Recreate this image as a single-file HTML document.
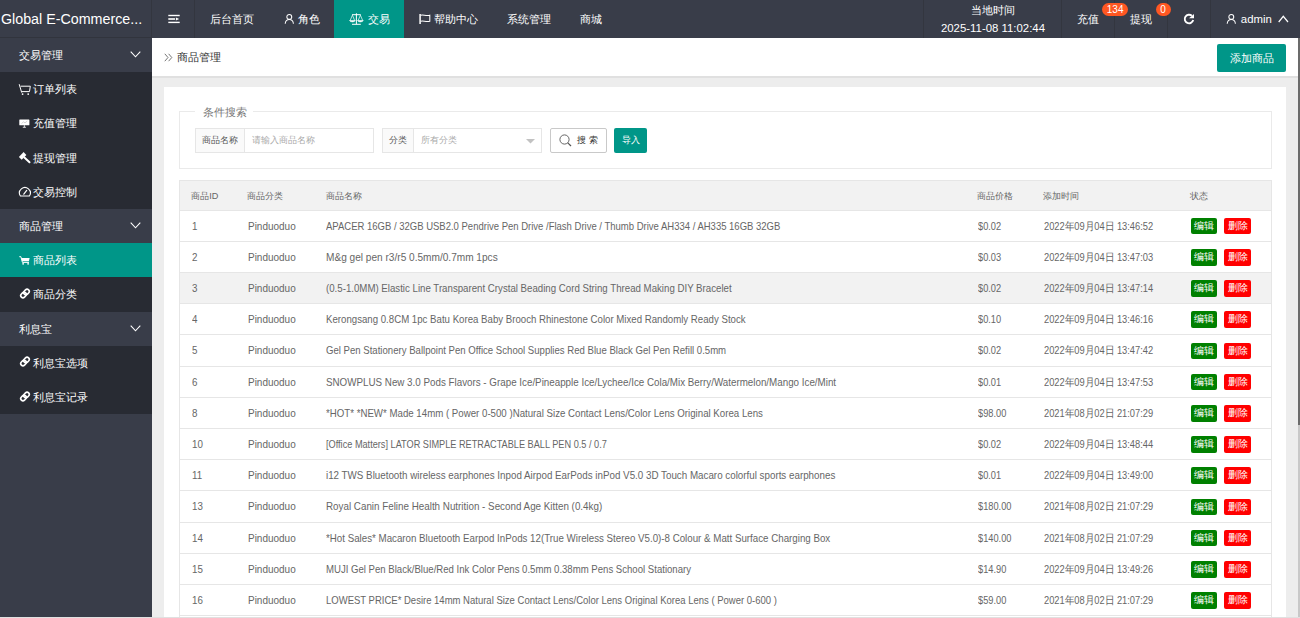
<!DOCTYPE html>
<html><head><meta charset="utf-8">
<style>
*{box-sizing:border-box;margin:0;padding:0}
html,body{width:1300px;height:618px;overflow:hidden;background:#ededed;font-family:"Liberation Sans",sans-serif;color:#666}
.abs{position:absolute}
#hdr{position:absolute;left:0;top:0;width:1300px;height:38px;background:#393D49;color:#fff}
#hdr .t{position:absolute;top:0;height:38px;line-height:38px;font-size:10.64px;color:#fff;white-space:nowrap}
#hdr .sep{position:absolute;top:0;width:1px;height:38px;background:#33363f}
#logo{position:absolute;left:0;top:0;width:160px;height:38px;line-height:38px;font-size:15.2px;color:#fff;white-space:nowrap;transform:scaleX(0.94);transform-origin:0 50%}
#side{position:absolute;left:0;top:38px;width:152px;height:580px;background:#393D49}
#side .g{position:absolute;left:0;width:152px;height:34.2px;line-height:34.2px;font-size:10.64px;color:#fff;padding-left:19px}
#side .d{position:absolute;left:0;width:152px;background:#282B33}
#side .i{position:absolute;left:0;width:152px;height:34.2px;line-height:34.2px;font-size:10.64px;color:#fff;padding-left:33px;white-space:nowrap}
#side .i.on{background:#009688}
#side svg{position:absolute}
#crumb{position:absolute;left:152px;top:38px;width:1146px;height:39.6px;background:#fff;border-bottom:2px solid #e0e0e0}
#card{position:absolute;left:164px;top:87px;width:1122.3px;height:540px;background:#fff}
#fs{position:absolute;left:179px;top:110.7px;width:1093px;height:58.3px;border:1px solid #eaeaea}
#legend{position:absolute;left:195px;top:105px;padding:0 6px 0 8px;background:#fff;font-size:11.4px;color:#777;line-height:14px}
.ig{position:absolute;top:128px;height:25px;border:1px solid #e6e6e6;background:#fff}
.ig .lab{position:absolute;left:0;top:0;height:23px;line-height:23px;background:#fafafa;border-right:1px solid #e6e6e6;font-size:9.12px;color:#555;text-align:center}
.ig .ph{position:absolute;top:0;height:23px;line-height:23px;font-size:9.12px;color:#aaa}
#tbl{position:absolute;left:179.4px;top:180.2px;width:1092.3px}
.tr{position:absolute;left:0;width:1092.3px;border-bottom:1px solid #e6e6e6;border-left:1px solid #e6e6e6;border-right:1px solid #e6e6e6}
.tr .c{position:absolute;top:0;white-space:nowrap;font-size:10.64px;color:#666;transform-origin:0 50%}
.th .c{font-size:9.12px}
.btn{position:absolute;width:26.7px;height:16.6px;border-radius:2px;color:#fff;font-size:9.7px;line-height:16.6px;text-align:center}
.be{background:#008000}
.bd{background:#ff0000}
</style></head><body>

<div id="hdr">
  <div class="abs" style="left:0;top:37px;width:152px;height:1px;background:#31343d"></div>
  <div id="logo" style="padding-left:1px">Global E-Commerce...</div>
  <div class="sep" style="left:151px"></div>
  <div class="sep" style="left:194px"></div>
  <!-- hamburger -->
  <svg class="abs" style="left:168px;top:14px" width="12" height="10" viewBox="0 0 12 10"><rect x="0.3" y="0.8" width="11.4" height="1.4" fill="#fff"/><rect x="0.3" y="4.2" width="6.7" height="1.6" fill="#fff"/><path d="M7.9 3.5 L11.2 5 L7.9 6.5 Z" fill="#fff"/><rect x="0.3" y="7.7" width="11.4" height="1.4" fill="#fff"/></svg>
  <div class="t" style="left:210px">后台首页</div>
  <svg class="abs" style="left:283.6px;top:13px" width="11" height="12" viewBox="0 0 11 12" fill="none" stroke="#fff" stroke-width="1.05"><circle cx="5.3" cy="3.9" r="2.45"/><path d="M1.2 10.7 C1.4 8 3.2 6.5 5.3 6.5 C7.4 6.5 9.2 8 9.4 10.7"/></svg>
  <div class="t" style="left:298px">角色</div>
  <div class="abs" style="left:334.2px;top:0;width:69.6px;height:38px;background:#009688"></div>
  <svg class="abs" style="left:349px;top:13px" width="15" height="12" viewBox="0 0 15 12"><path d="M7.4 0.3 V11.2 M3 11.3 H11.8 M3 1.7 H11.8" stroke="#fff" stroke-width="1" fill="none"/><path d="M1 7.8 L3.4 2.2 L5.8 7.8 M9 7.8 L11.4 2.2 L13.8 7.8" fill="none" stroke="#fff" stroke-width="0.7"/><path d="M0.6 7.6 H6.2 C6 9.3 0.8 9.3 0.6 7.6 Z M8.6 7.6 H14.2 C14 9.3 8.8 9.3 8.6 7.6Z" fill="#fff" stroke="#fff" stroke-width="0.6"/></svg>
  <div class="t" style="left:367.5px">交易</div>
  <svg class="abs" style="left:418px;top:13px" width="13" height="12" viewBox="0 0 13 12" fill="none" stroke="#fff"><path d="M2.1 1 V11" stroke-width="1.5"/><path d="M2.6 2.3 C5 0.9 7.5 3.4 11.8 2.3 V8.3 C7.5 9.4 5 6.9 2.6 8.3" stroke-width="1.05"/></svg>
  <div class="t" style="left:433.6px">帮助中心</div>
  <div class="t" style="left:507px">系统管理</div>
  <div class="t" style="left:580px">商城</div>

  <div class="sep" style="left:923px"></div>
  <div class="t" style="left:924px;width:138px;text-align:center;line-height:12px;top:4px">当地时间</div>
  <div class="t" style="left:924px;width:138px;text-align:center;line-height:12px;top:21.5px;font-size:11.4px">2025-11-08 11:02:44</div>
  <div class="sep" style="left:1061px"></div>
  <div class="t" style="left:1076.6px">充值</div>
  <div class="abs" style="left:1102px;top:2.8px;width:26.3px;height:13px;border-radius:7px;background:#FF5722;color:#fff;font-size:10px;line-height:13px;text-align:center;z-index:3">134</div>
  <div class="sep" style="left:1114px"></div>
  <div class="t" style="left:1129.7px">提现</div>
  <div class="abs" style="left:1155.6px;top:2.8px;width:15px;height:13px;border-radius:7px;background:#FF5722;color:#fff;font-size:10px;line-height:13px;text-align:center;z-index:3">0</div>
  <div class="sep" style="left:1167px"></div>
  <svg class="abs" style="left:1183px;top:13px" width="12" height="12" viewBox="0 0 12 12"><path d="M10.2 7.1 A4.3 4.3 0 1 1 8.9 2.8" fill="none" stroke="#fff" stroke-width="1.9"/><path d="M6 5.3 H11 V1 Z" fill="#fff"/></svg>
  <div class="sep" style="left:1210px"></div>
  <svg class="abs" style="left:1226.3px;top:13px" width="11" height="12" viewBox="0 0 11 12" fill="none" stroke="#fff" stroke-width="1.05"><circle cx="5.3" cy="3.9" r="2.45"/><path d="M1.2 10.7 C1.4 8 3.2 6.5 5.3 6.5 C7.4 6.5 9.2 8 9.4 10.7"/></svg>
  <div class="t" style="left:1240.8px;font-size:11.4px">admin</div>
  <svg class="abs" style="left:1278px;top:15px" width="11" height="8" viewBox="0 0 11 8"><path d="M0.7 7 L5.3 1.3 L10 7" fill="none" stroke="#fff" stroke-width="1.2"/></svg>
</div>

<div id="side">
  <div class="g" style="top:0">交易管理</div>
  <svg style="left:130px;top:13px" width="11" height="7" viewBox="0 0 11 7"><path d="M0.7 0.7 L5.5 5.8 L10.3 0.7" fill="none" stroke="#fff" stroke-width="1.1"/></svg>
  <div class="d" style="top:34.2px;height:136.8px"></div>
  <div class="i" style="top:34.2px">订单列表</div>
  <div class="i" style="top:68.4px">充值管理</div>
  <div class="i" style="top:102.6px">提现管理</div>
  <div class="i" style="top:136.8px">交易控制</div>
  <div class="g" style="top:171px">商品管理</div>
  <svg style="left:130px;top:184px" width="11" height="7" viewBox="0 0 11 7"><path d="M0.7 0.7 L5.5 5.8 L10.3 0.7" fill="none" stroke="#fff" stroke-width="1.1"/></svg>
  <div class="d" style="top:205.2px;height:68.4px"></div>
  <div class="i on" style="top:205.2px">商品列表</div>
  <div class="i" style="top:239.4px">商品分类</div>
  <div class="g" style="top:273.6px">利息宝</div>
  <svg style="left:130px;top:287px" width="11" height="7" viewBox="0 0 11 7"><path d="M0.7 0.7 L5.5 5.8 L10.3 0.7" fill="none" stroke="#fff" stroke-width="1.1"/></svg>
  <div class="d" style="top:307.8px;height:68.4px"></div>
  <div class="i" style="top:307.8px">利息宝选项</div>
  <div class="i" style="top:342px">利息宝记录</div>
</div>

<div id="crumb">
  <svg class="abs" style="left:12px;top:15px" width="9" height="9" viewBox="0 0 9 9"><path d="M0.8 0.8 L4 4.5 L0.8 8.2 M4.6 0.8 L7.8 4.5 L4.6 8.2" fill="none" stroke="#666" stroke-width="0.9"/></svg>
  <div class="abs" style="left:24.5px;top:0;line-height:38px;font-size:10.64px;color:#333">商品管理</div>
  <div class="abs" style="left:1065px;top:6px;width:69.2px;height:27.7px;background:#009688;border-radius:2px;color:#fff;font-size:10.64px;line-height:29.5px;text-align:center">添加商品</div>
</div>

<div id="card"></div>
<div id="fs"></div>
<div id="legend">条件搜索</div>

<div class="ig" style="left:195.3px;width:178.4px">
  <div class="lab" style="width:48.4px">商品名称</div>
  <div class="ph" style="left:56px">请输入商品名称</div>
</div>
<div class="ig" style="left:382.2px;width:160px">
  <div class="lab" style="width:30.6px">分类</div>
  <div class="ph" style="left:37.8px">所有分类</div>
  <svg class="abs" style="left:142.8px;top:9.6px" width="9" height="5" viewBox="0 0 9 5"><path d="M0 0 H9 L4.5 4.5Z" fill="#c2c2c2"/></svg>
</div>
<div class="abs" style="left:550px;top:128.3px;width:56.6px;height:24.6px;border:1px solid #c9c9c9;border-radius:2px;background:#fff"></div>
<svg class="abs" style="left:559px;top:134px" width="13" height="13" viewBox="0 0 13 13"><circle cx="5.5" cy="5.5" r="4.6" fill="none" stroke="#555" stroke-width="0.9"/><path d="M8.8 8.8 L12 12" stroke="#555" stroke-width="1.2"/></svg>
<div class="abs" style="left:577px;top:128.3px;line-height:24.6px;font-size:9.12px;color:#333;letter-spacing:2.5px">搜索</div>
<div class="abs" style="left:614px;top:128.3px;width:33.2px;height:24.6px;background:#009688;border-radius:2px;color:#fff;font-size:9.12px;line-height:24.6px;text-align:center">导入</div>

<!--TBL-->
<div id="tbl">
<div class="tr th" style="top:0px;height:30.60px;background:#f2f2f2;border-top:1px solid #e6e6e6">
<span class="c" style="left:10.8px;line-height:30.5px">商品ID</span>
<span class="c" style="left:66.6px;line-height:30.5px">商品分类</span>
<span class="c" style="left:145.8px;line-height:30.5px">商品名称</span>
<span class="c" style="left:797.0px;line-height:30.5px">商品价格</span>
<span class="c" style="left:863.0px;line-height:30.5px">添加时间</span>
<span class="c" style="left:1009.7px;line-height:30.5px">状态</span>
</div>
<div class="tr" style="top:30.50px;height:31.21px;background:#fff">
<span class="c" style="left:11.4px;line-height:30.20px;transform:scaleX(0.9200)">1</span>
<span class="c" style="left:68.0px;line-height:30.20px;transform:scaleX(0.9390)">Pinduoduo</span>
<span class="c" style="left:145.8px;line-height:30.20px;transform:scaleX(0.8942)">APACER 16GB / 32GB USB2.0 Pendrive Pen Drive /Flash Drive / Thumb Drive AH334 / AH335 16GB 32GB</span>
<span class="c" style="left:797.5px;line-height:30.20px;transform:scaleX(0.8700)">$0.02</span>
<span class="c" style="left:863.2px;line-height:30.20px;transform:scaleX(0.8760)">2022年09月04日 13:46:52</span>
<span class="btn be" style="left:1010.4px;top:7.1px;width:26.6px">编辑</span>
<span class="btn bd" style="left:1044.1px;top:7.1px;width:26.2px">删除</span>
</div>
<div class="tr" style="top:61.70px;height:31.21px;background:#fff">
<span class="c" style="left:11.4px;line-height:30.20px;transform:scaleX(0.9200)">2</span>
<span class="c" style="left:68.0px;line-height:30.20px;transform:scaleX(0.9390)">Pinduoduo</span>
<span class="c" style="left:145.8px;line-height:30.20px;transform:scaleX(0.9502)">M&amp;g gel pen r3/r5 0.5mm/0.7mm 1pcs</span>
<span class="c" style="left:797.5px;line-height:30.20px;transform:scaleX(0.8700)">$0.03</span>
<span class="c" style="left:863.2px;line-height:30.20px;transform:scaleX(0.8760)">2022年09月04日 13:47:03</span>
<span class="btn be" style="left:1010.4px;top:7.1px;width:26.6px">编辑</span>
<span class="btn bd" style="left:1044.1px;top:7.1px;width:26.2px">删除</span>
</div>
<div class="tr" style="top:92.90px;height:31.21px;background:#f2f2f2">
<span class="c" style="left:11.4px;line-height:30.20px;transform:scaleX(0.9200)">3</span>
<span class="c" style="left:68.0px;line-height:30.20px;transform:scaleX(0.9390)">Pinduoduo</span>
<span class="c" style="left:145.8px;line-height:30.20px;transform:scaleX(0.9105)">(0.5-1.0MM) Elastic Line Transparent Crystal Beading Cord String Thread Making DIY Bracelet</span>
<span class="c" style="left:797.5px;line-height:30.20px;transform:scaleX(0.8700)">$0.02</span>
<span class="c" style="left:863.2px;line-height:30.20px;transform:scaleX(0.8760)">2022年09月04日 13:47:14</span>
<span class="btn be" style="left:1010.4px;top:7.1px;width:26.6px">编辑</span>
<span class="btn bd" style="left:1044.1px;top:7.1px;width:26.2px">删除</span>
</div>
<div class="tr" style="top:124.10px;height:31.21px;background:#fff">
<span class="c" style="left:11.4px;line-height:30.20px;transform:scaleX(0.9200)">4</span>
<span class="c" style="left:68.0px;line-height:30.20px;transform:scaleX(0.9390)">Pinduoduo</span>
<span class="c" style="left:145.8px;line-height:30.20px;transform:scaleX(0.9085)">Kerongsang 0.8CM 1pc Batu Korea Baby Brooch Rhinestone Color Mixed Randomly Ready Stock</span>
<span class="c" style="left:797.5px;line-height:30.20px;transform:scaleX(0.8700)">$0.10</span>
<span class="c" style="left:863.2px;line-height:30.20px;transform:scaleX(0.8760)">2022年09月04日 13:46:16</span>
<span class="btn be" style="left:1010.4px;top:7.1px;width:26.6px">编辑</span>
<span class="btn bd" style="left:1044.1px;top:7.1px;width:26.2px">删除</span>
</div>
<div class="tr" style="top:155.30px;height:31.21px;background:#fff">
<span class="c" style="left:11.4px;line-height:30.20px;transform:scaleX(0.9200)">5</span>
<span class="c" style="left:68.0px;line-height:30.20px;transform:scaleX(0.9390)">Pinduoduo</span>
<span class="c" style="left:145.8px;line-height:30.20px;transform:scaleX(0.9025)">Gel Pen Stationery Ballpoint Pen Office School Supplies Red Blue Black Gel Pen Refill 0.5mm</span>
<span class="c" style="left:797.5px;line-height:30.20px;transform:scaleX(0.8700)">$0.02</span>
<span class="c" style="left:863.2px;line-height:30.20px;transform:scaleX(0.8760)">2022年09月04日 13:47:42</span>
<span class="btn be" style="left:1010.4px;top:7.1px;width:26.6px">编辑</span>
<span class="btn bd" style="left:1044.1px;top:7.1px;width:26.2px">删除</span>
</div>
<div class="tr" style="top:186.50px;height:31.21px;background:#fff">
<span class="c" style="left:11.4px;line-height:30.20px;transform:scaleX(0.9200)">6</span>
<span class="c" style="left:68.0px;line-height:30.20px;transform:scaleX(0.9390)">Pinduoduo</span>
<span class="c" style="left:145.8px;line-height:30.20px;transform:scaleX(0.9222)">SNOWPLUS New 3.0 Pods Flavors - Grape Ice/Pineapple Ice/Lychee/Ice Cola/Mix Berry/Watermelon/Mango Ice/Mint</span>
<span class="c" style="left:797.5px;line-height:30.20px;transform:scaleX(0.8700)">$0.01</span>
<span class="c" style="left:863.2px;line-height:30.20px;transform:scaleX(0.8760)">2022年09月04日 13:47:53</span>
<span class="btn be" style="left:1010.4px;top:7.1px;width:26.6px">编辑</span>
<span class="btn bd" style="left:1044.1px;top:7.1px;width:26.2px">删除</span>
</div>
<div class="tr" style="top:217.70px;height:31.21px;background:#fff">
<span class="c" style="left:11.4px;line-height:30.20px;transform:scaleX(0.9200)">8</span>
<span class="c" style="left:68.0px;line-height:30.20px;transform:scaleX(0.9390)">Pinduoduo</span>
<span class="c" style="left:145.8px;line-height:30.20px;transform:scaleX(0.9111)">*HOT* *NEW* Made 14mm ( Power 0-500 )Natural Size Contact Lens/Color Lens Original Korea Lens</span>
<span class="c" style="left:797.5px;line-height:30.20px;transform:scaleX(0.8700)">$98.00</span>
<span class="c" style="left:863.2px;line-height:30.20px;transform:scaleX(0.8760)">2021年08月02日 21:07:29</span>
<span class="btn be" style="left:1010.4px;top:7.1px;width:26.6px">编辑</span>
<span class="btn bd" style="left:1044.1px;top:7.1px;width:26.2px">删除</span>
</div>
<div class="tr" style="top:248.90px;height:31.21px;background:#fff">
<span class="c" style="left:11.4px;line-height:30.20px;transform:scaleX(0.9200)">10</span>
<span class="c" style="left:68.0px;line-height:30.20px;transform:scaleX(0.9390)">Pinduoduo</span>
<span class="c" style="left:145.8px;line-height:30.20px;transform:scaleX(0.8630)">[Office Matters] LATOR SIMPLE RETRACTABLE BALL PEN 0.5 / 0.7</span>
<span class="c" style="left:797.5px;line-height:30.20px;transform:scaleX(0.8700)">$0.02</span>
<span class="c" style="left:863.2px;line-height:30.20px;transform:scaleX(0.8760)">2022年09月04日 13:48:44</span>
<span class="btn be" style="left:1010.4px;top:7.1px;width:26.6px">编辑</span>
<span class="btn bd" style="left:1044.1px;top:7.1px;width:26.2px">删除</span>
</div>
<div class="tr" style="top:280.10px;height:31.21px;background:#fff">
<span class="c" style="left:11.4px;line-height:30.20px;transform:scaleX(0.9200)">11</span>
<span class="c" style="left:68.0px;line-height:30.20px;transform:scaleX(0.9390)">Pinduoduo</span>
<span class="c" style="left:145.8px;line-height:30.20px;transform:scaleX(0.9219)">i12 TWS Bluetooth wireless earphones Inpod Airpod EarPods inPod V5.0 3D Touch Macaro colorful sports earphones</span>
<span class="c" style="left:797.5px;line-height:30.20px;transform:scaleX(0.8700)">$0.01</span>
<span class="c" style="left:863.2px;line-height:30.20px;transform:scaleX(0.8760)">2022年09月04日 13:49:00</span>
<span class="btn be" style="left:1010.4px;top:7.1px;width:26.6px">编辑</span>
<span class="btn bd" style="left:1044.1px;top:7.1px;width:26.2px">删除</span>
</div>
<div class="tr" style="top:311.30px;height:31.21px;background:#fff">
<span class="c" style="left:11.4px;line-height:30.20px;transform:scaleX(0.9200)">13</span>
<span class="c" style="left:68.0px;line-height:30.20px;transform:scaleX(0.9390)">Pinduoduo</span>
<span class="c" style="left:145.8px;line-height:30.20px;transform:scaleX(0.9242)">Royal Canin Feline Health Nutrition - Second Age Kitten (0.4kg)</span>
<span class="c" style="left:797.5px;line-height:30.20px;transform:scaleX(0.8700)">$180.00</span>
<span class="c" style="left:863.2px;line-height:30.20px;transform:scaleX(0.8760)">2021年08月02日 21:07:29</span>
<span class="btn be" style="left:1010.4px;top:7.1px;width:26.6px">编辑</span>
<span class="btn bd" style="left:1044.1px;top:7.1px;width:26.2px">删除</span>
</div>
<div class="tr" style="top:342.50px;height:31.21px;background:#fff">
<span class="c" style="left:11.4px;line-height:30.20px;transform:scaleX(0.9200)">14</span>
<span class="c" style="left:68.0px;line-height:30.20px;transform:scaleX(0.9390)">Pinduoduo</span>
<span class="c" style="left:145.8px;line-height:30.20px;transform:scaleX(0.9167)">*Hot Sales* Macaron Bluetooth Earpod InPods 12(True Wireless Stereo V5.0)-8 Colour &amp; Matt Surface Charging Box</span>
<span class="c" style="left:797.5px;line-height:30.20px;transform:scaleX(0.8700)">$140.00</span>
<span class="c" style="left:863.2px;line-height:30.20px;transform:scaleX(0.8760)">2021年08月02日 21:07:29</span>
<span class="btn be" style="left:1010.4px;top:7.1px;width:26.6px">编辑</span>
<span class="btn bd" style="left:1044.1px;top:7.1px;width:26.2px">删除</span>
</div>
<div class="tr" style="top:373.70px;height:31.21px;background:#fff">
<span class="c" style="left:11.4px;line-height:30.20px;transform:scaleX(0.9200)">15</span>
<span class="c" style="left:68.0px;line-height:30.20px;transform:scaleX(0.9390)">Pinduoduo</span>
<span class="c" style="left:145.8px;line-height:30.20px;transform:scaleX(0.9023)">MUJI Gel Pen Black/Blue/Red Ink Color Pens 0.5mm 0.38mm Pens School Stationary</span>
<span class="c" style="left:797.5px;line-height:30.20px;transform:scaleX(0.8700)">$14.90</span>
<span class="c" style="left:863.2px;line-height:30.20px;transform:scaleX(0.8760)">2022年09月04日 13:49:26</span>
<span class="btn be" style="left:1010.4px;top:7.1px;width:26.6px">编辑</span>
<span class="btn bd" style="left:1044.1px;top:7.1px;width:26.2px">删除</span>
</div>
<div class="tr" style="top:404.90px;height:31.21px;background:#fff">
<span class="c" style="left:11.4px;line-height:30.20px;transform:scaleX(0.9200)">16</span>
<span class="c" style="left:68.0px;line-height:30.20px;transform:scaleX(0.9390)">Pinduoduo</span>
<span class="c" style="left:145.8px;line-height:30.20px;transform:scaleX(0.8944)">LOWEST PRICE* Desire 14mm Natural Size Contact Lens/Color Lens Original Korea Lens ( Power 0-600 )</span>
<span class="c" style="left:797.5px;line-height:30.20px;transform:scaleX(0.8700)">$59.00</span>
<span class="c" style="left:863.2px;line-height:30.20px;transform:scaleX(0.8760)">2021年08月02日 21:07:29</span>
<span class="btn be" style="left:1010.4px;top:7.1px;width:26.6px">编辑</span>
<span class="btn bd" style="left:1044.1px;top:7.1px;width:26.2px">删除</span>
</div>
<div class="tr" style="top:436.10px;height:31.21px;background:#fff">
<span class="c" style="left:11.4px;line-height:30.20px;transform:scaleX(0.9200)">17</span>
<span class="c" style="left:68.0px;line-height:30.20px;transform:scaleX(0.9390)">Pinduoduo</span>
<span class="c" style="left:145.8px;line-height:30.20px;transform:scaleX(0.9000)">Xiaomi Mi Band 5</span>
<span class="c" style="left:797.5px;line-height:30.20px;transform:scaleX(0.8700)">$28.00</span>
<span class="c" style="left:863.2px;line-height:30.20px;transform:scaleX(0.8760)">2021年08月02日 21:07:29</span>
<span class="btn be" style="left:1010.4px;top:7.1px;width:26.6px">编辑</span>
<span class="btn bd" style="left:1044.1px;top:7.1px;width:26.2px">删除</span>
</div>
</div>
<!--/TBL-->
<!-- side icons -->
<svg class="abs" style="left:18px;top:83px" width="14" height="13" viewBox="0 0 14 13" fill="none" stroke="#fff" stroke-width="1"><path d="M1.2 1.2 L3.7 9.6"/><path d="M2.6 3.2 H12.3 L11.5 8.6 H3.5"/><circle cx="4.6" cy="11.1" r="0.9" fill="#fff" stroke="none"/><circle cx="10.2" cy="11.1" r="0.9" fill="#fff" stroke="none"/></svg>
<svg class="abs" style="left:18px;top:118px" width="13" height="11" viewBox="0 0 13 11"><rect x="1.3" y="1.6" width="10.1" height="5.7" rx="0.5" fill="#fff"/><path d="M3.5 5.6 L5.5 3.8 L7 4.9 L9.3 3" fill="none" stroke="#bbb" stroke-width="0.6"/><path d="M6.35 7.2 V9.2 M4.8 9.3 H7.9" stroke="#fff" stroke-width="0.8"/></svg>
<svg class="abs" style="left:18px;top:151px" width="14" height="13" viewBox="0 0 14 13"><path d="M0.9 6.0 L5.6 1.1 L8.4 3.9 L3.7 8.8 Z" fill="#fff"/><path d="M6.4 6.4 L11.5 11.2" stroke="#fff" stroke-width="2" stroke-linecap="round"/></svg>
<svg class="abs" style="left:18px;top:186px" width="14" height="12" viewBox="0 0 14 12" fill="none" stroke="#fff"><path d="M2.4 10 A5.4 5.4 0 1 1 11.4 10 Z" stroke-width="1.1"/><path d="M5.8 8.2 L8.7 4.4" stroke-width="1.2" stroke-linecap="round"/></svg>
<svg class="abs" style="left:18px;top:255px" width="13" height="11" viewBox="0 0 13 11"><path d="M1.3 1.7 H2.9 L4.4 7.4 H11" fill="none" stroke="#fff" stroke-width="1"/><path d="M3.4 3 H11.6 L10.9 6.2 H4.2 Z" fill="#fff"/><circle cx="5.1" cy="8.8" r="0.9" fill="#fff"/><circle cx="10.1" cy="8.8" r="0.9" fill="#fff"/></svg>
<svg class="abs" style="left:17.5px;top:286.9px" width="14" height="13" viewBox="0 0 14 13" fill="none" stroke="#fff" stroke-width="1.6"><g transform="rotate(-45 7 6.5)"><rect x="1.9" y="4.3" width="6" height="4.4" rx="2.2"/><rect x="6.1" y="4.3" width="6" height="4.4" rx="2.2"/></g></svg>
<svg class="abs" style="left:17.5px;top:355.3px" width="14" height="13" viewBox="0 0 14 13" fill="none" stroke="#fff" stroke-width="1.6"><g transform="rotate(-45 7 6.5)"><rect x="1.9" y="4.3" width="6" height="4.4" rx="2.2"/><rect x="6.1" y="4.3" width="6" height="4.4" rx="2.2"/></g></svg>
<svg class="abs" style="left:17.5px;top:389.5px" width="14" height="13" viewBox="0 0 14 13" fill="none" stroke="#fff" stroke-width="1.6"><g transform="rotate(-45 7 6.5)"><rect x="1.9" y="4.3" width="6" height="4.4" rx="2.2"/><rect x="6.1" y="4.3" width="6" height="4.4" rx="2.2"/></g></svg>
<!-- scrollbar -->
<div class="abs" style="left:1298px;top:38px;width:2px;height:387px;background:#6b6b6b"></div>
<div class="abs" style="left:1298px;top:425px;width:2px;height:193px;background:#c8c8c8"></div>
<div class="abs" style="left:0;top:616.5px;width:1300px;height:1.5px;background:#e0e0e0"></div>

</body></html>
